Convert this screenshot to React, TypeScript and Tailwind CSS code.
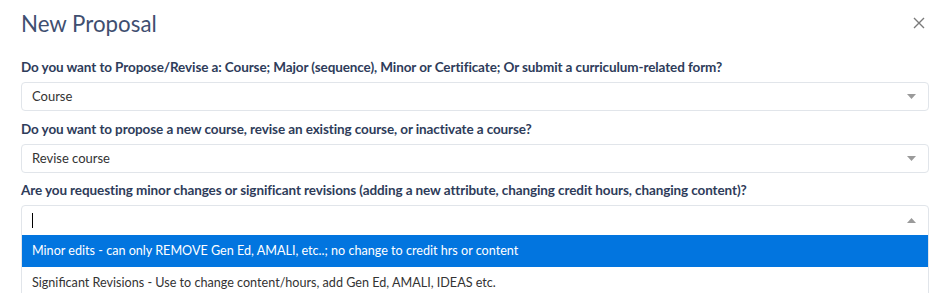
import React from "react";

function Caret({ up }: { up?: boolean }) {
  return (
    <svg width="9" height="5" viewBox="0 0 9 5" className="shrink-0">
      {up ? <polygon points="0,5 9,5 4.5,0" fill="#9a9a9a" /> : <polygon points="0,0 9,0 4.5,5" fill="#9a9a9a" />}
    </svg>
  );
}

function Label({ children }: { children: React.ReactNode }) {
  return <div className="h-[20px] leading-[20px] text-[13.5px] font-bold text-[#2e3c5a] tracking-[-0.1px]">{children}</div>;
}

function Select({ value }: { value: string }) {
  return (
    <div className="h-[29px] mt-[5px] flex items-center justify-between border border-[#e1e5ea] rounded-[4px] pl-[10px] pr-[12px] bg-white">
      <span className="text-[13px] text-[#333]">{value}</span>
      <Caret />
    </div>
  );
}

export default function App() {
  return (
    <div className="w-[946px] h-[293px] bg-white overflow-hidden" style={{ fontFamily: "Lato, 'Noto Sans', sans-serif" }}>
      <div className="pl-[21px] pr-[17px]">
        <div className="h-[57px] pt-[9px] flex justify-between">
          <h1 className="text-[22.3px] leading-[30px] text-[#3f4f70] font-normal">New Proposal</h1>
          <svg width="12" height="12" viewBox="0 0 12 12" className="mt-[8px] mr-[4px]">
            <path d="M1 1 L11 11 M11 1 L1 11" stroke="#7a7a7a" strokeWidth="1.4" />
          </svg>
        </div>
        <Label>Do you want to Propose/Revise a: Course; Major (sequence), Minor or Certificate; Or submit a curriculum-related form?</Label>
        <Select value="Course" />
        <div className="h-[8px]" />
        <Label>Do you want to propose a new course, revise an existing course, or inactivate a course?</Label>
        <Select value="Revise course" />
        <div className="h-[7px]" />
        <Label>Are you requesting minor changes or significant revisions (adding a new attribute, changing credit hours, changing content)?</Label>
        <div className="mt-[5px] border border-[#e1e5ea] rounded-t-[4px]">
          <div className="h-[29px] flex items-center justify-between pl-[10px] pr-[12px]">
            <span className="w-px h-[15px] bg-black" />
            <Caret up />
          </div>
          <div className="h-[32px] flex items-center bg-[#0275df] pl-[10px] text-[12.6px] text-white">
            Minor edits - can only REMOVE Gen Ed, AMALI, etc..; no change to credit hrs or content
          </div>
          <div className="h-[32px] flex items-center pl-[10px] text-[12.6px] text-[#333]">
            Significant Revisions - Use to change content/hours, add Gen Ed, AMALI, IDEAS etc.
          </div>
        </div>
      </div>
    </div>
  );
}
